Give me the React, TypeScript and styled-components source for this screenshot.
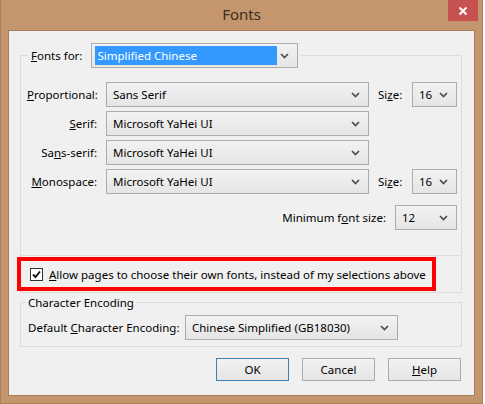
import React from "react";
import styled, { createGlobalStyle } from "styled-components";

const GlobalStyle = createGlobalStyle`
  html, body {
    margin: 0;
    padding: 0;
    background: #ffffff;
  }
  body {
    font-family: "Noto Sans", "Open Sans", sans-serif;
    font-size: 11.5px;
    color: #000;
  }
`;

const Chevron = () => (
  <svg width="9" height="6" viewBox="0 0 9 6">
    <path d="M1 1 L4.5 4.5 L8 1" fill="none" stroke="#4d4d4d" strokeWidth="1.7" />
  </svg>
);

const Check = () => (
  <svg width="11" height="11" viewBox="0 0 11 11">
    <path d="M2 5.5 L4.5 8 L9 2.5" fill="none" stroke="#111" strokeWidth="1.9" />
  </svg>
);

function Combo(props: { value: string; width: number }) {
  return (
    <ComboBox $width={props.width}>
      <span>{props.value}</span>
      <Chevron />
    </ComboBox>
  );
}

export default function App() {
  return (
    <>
      <GlobalStyle />
      <Window>
        <TitleBar>
          <span />
          <Title>Fonts</Title>
          <CloseButton>
            <svg width="10" height="10" viewBox="0 0 10 10">
              <path d="M1.5 1.5 L8.5 8.5 M8.5 1.5 L1.5 8.5" stroke="#fff" strokeWidth="2" />
            </svg>
          </CloseButton>
        </TitleBar>
        <Client>
          <FontsGroup>
            <Legend>
              <span>
                <u>F</u>onts for:
              </span>
              <LangCombo>
                <Selected>Simplified Chinese</Selected>
                <Chevron />
              </LangCombo>
            </Legend>
            <FontGrid>
              <RowLabel>
                <u>P</u>roportional:
              </RowLabel>
              <Combo value="Sans Serif" width={263} />
              <SizeLabel>
                Si<u>z</u>e:
              </SizeLabel>
              <Combo value="16" width={45} />

              <RowLabel>
                <u>S</u>erif:
              </RowLabel>
              <Combo value="Microsoft YaHei UI" width={263} />
              <span />
              <span />

              <RowLabel>
                Sa<u>n</u>s-serif:
              </RowLabel>
              <Combo value="Microsoft YaHei UI" width={263} />
              <span />
              <span />

              <RowLabel>
                <u>M</u>onospace:
              </RowLabel>
              <Combo value="Microsoft YaHei UI" width={263} />
              <SizeLabel>
                Si<u>z</u>e:
              </SizeLabel>
              <Combo value="16" width={45} />
            </FontGrid>
            <MinRow>
              <span>
                Minimum f<u>o</u>nt size:
              </span>
              <Combo value="12" width={62} />
            </MinRow>
            <Separator />
            <CheckRow>
              <CheckBox>
                <Check />
              </CheckBox>
              <span>
                <u>A</u>llow pages to choose their own fonts, instead of my selections above
              </span>
            </CheckRow>
          </FontsGroup>

          <EncodingGroup>
            <EncodingLegend>Character Encoding</EncodingLegend>
            <EncodingRow>
              <EncodingLabel>
                Default <u>C</u>haracter Encoding:
              </EncodingLabel>
              <Combo value="Chinese Simplified (GB18030)" width={213} />
            </EncodingRow>
          </EncodingGroup>

          <ButtonRow>
            <Button $primary>OK</Button>
            <Button>Cancel</Button>
            <Button>
              <u>H</u>elp
            </Button>
          </ButtonRow>
        </Client>
      </Window>
    </>
  );
}

const Window = styled.div`
  width: 483px;
  height: 404px;
  box-sizing: border-box;
  background: #c3966d;
  border: 1px solid #a97f5a;
  border-top-color: #c3966d;
  padding: 0 7px 7px 7px;
  display: flex;
  flex-direction: column;
`;

const TitleBar = styled.div`
  height: 30px;
  display: grid;
  grid-template-columns: 1fr auto 1fr;
  margin-top: -1px;
`;

const Title = styled.div`
  align-self: center;
  font-size: 15px;
  color: #3a2d22;
  padding-bottom: 2px;
`;

const CloseButton = styled.div`
  justify-self: end;
  align-self: start;
  width: 30px;
  height: 21px;
  margin-right: -3px;
  background: #c75050;
  display: flex;
  align-items: center;
  justify-content: center;
`;

const Client = styled.div`
  flex: 1;
  background: #f0f0f0;
  border: 1px solid #a97f5a;
  box-sizing: border-box;
  padding: 12px 12px 0 11px;
  display: flex;
  flex-direction: column;
`;

const GroupBox = styled.fieldset`
  margin: 0;
  min-width: 0;
  border: 1px solid #dcdcdc;
`;

const FontsGroup = styled(GroupBox)`
  padding: 14px 4px 1px 6px;
`;

const Legend = styled.legend`
  margin-left: 1px;
  padding: 0 3px;
  display: flex;
  align-items: center;
  gap: 9px;
`;

const ComboBox = styled.div<{ $width: number }>`
  width: ${(p) => p.$width}px;
  height: 25px;
  box-sizing: border-box;
  border: 1px solid #acacac;
  background: linear-gradient(#f2f2f2, #e5e5e5);
  display: flex;
  align-items: center;
  justify-content: space-between;
  padding: 0 8px 0 6px;
  white-space: nowrap;
`;

const LangCombo = styled(ComboBox).attrs({ $width: 207 })`
  padding: 0 8px 0 3px;
`;

const Selected = styled.span`
  width: 182px;
  height: 19px;
  box-sizing: border-box;
  background: #3399ff;
  color: #fff;
  padding-left: 2px;
  display: flex;
  align-items: center;
`;

const FontGrid = styled.div`
  display: grid;
  grid-template-columns: 70px 263px 25px 45px;
  column-gap: 9px;
  row-gap: 4px;
  align-items: center;
`;

const RowLabel = styled.span`
  text-align: right;
  white-space: nowrap;
`;

const SizeLabel = styled.span`
  white-space: nowrap;
`;

const MinRow = styled.div`
  margin-top: 11px;
  display: flex;
  justify-content: flex-end;
  align-items: center;
  gap: 9px;
`;

const Separator = styled.div`
  height: 1px;
  background: #dcdcdc;
  margin: 25px -4px 0 -6px;
`;

const CheckRow = styled.div`
  margin: 1px 0 0 -10px;
  width: 419px;
  height: 34px;
  box-sizing: border-box;
  border: 4px solid #ff0000;
  padding-left: 9px;
  display: flex;
  align-items: center;
  gap: 6px;
  white-space: nowrap;
`;

const CheckBox = styled.div`
  width: 13px;
  height: 13px;
  box-sizing: border-box;
  border: 1px solid #333;
  background: #fff;
  display: flex;
  align-items: center;
  justify-content: center;
`;

const EncodingGroup = styled(GroupBox)`
  margin-top: 2px;
  padding: 5px 4px 6px 7px;
`;

const EncodingLegend = styled.legend`
  margin-left: -2px;
  padding: 0 2px;
  line-height: 15px;
`;

const EncodingRow = styled.div`
  display: flex;
  align-items: center;
  gap: 9px;
`;

const EncodingLabel = styled.span`
  width: 148px;
  white-space: nowrap;
`;

const ButtonRow = styled.div`
  margin-top: 11px;
  margin-right: 1px;
  display: flex;
  justify-content: flex-end;
  gap: 13px;
`;

const Button = styled.div<{ $primary?: boolean }>`
  width: 73px;
  height: 23px;
  box-sizing: border-box;
  border: 1px solid ${(p) => (p.$primary ? "#3c7fb1" : "#acacac")};
  background: linear-gradient(#f2f2f2, #e5e5e5);
  display: flex;
  align-items: center;
  justify-content: center;
`;
